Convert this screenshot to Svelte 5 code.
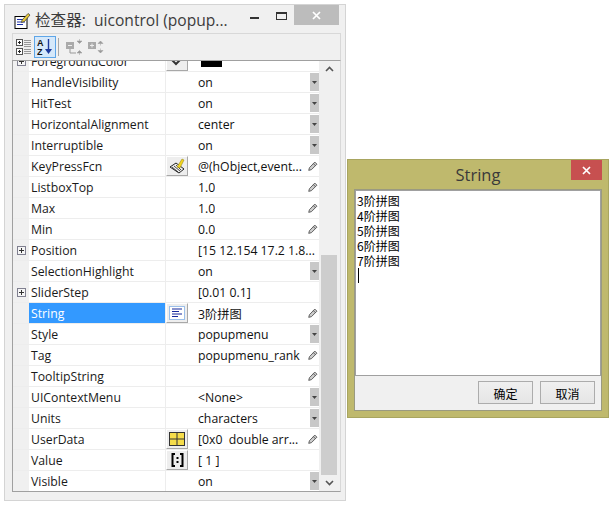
<script lang="ts">
  type Row = {
    name: string;
    value?: string;
    plus?: boolean;
    btn?: string;
    combo?: boolean;
    pen?: boolean;
    sel?: boolean;
    color?: string;
  };

  const rows: Row[] = [
    { name: "ForegroundColor", plus: true, btn: "color", color: "#000" },
    { name: "HandleVisibility", value: "on", combo: true },
    { name: "HitTest", value: "on", combo: true },
    { name: "HorizontalAlignment", value: "center", combo: true },
    { name: "Interruptible", value: "on", combo: true },
    { name: "KeyPressFcn", value: "@(hObject,event...", btn: "fcn", pen: true },
    { name: "ListboxTop", value: "1.0", pen: true },
    { name: "Max", value: "1.0", pen: true },
    { name: "Min", value: "0.0", pen: true },
    { name: "Position", value: "[15 12.154 17.2 1.8...", plus: true },
    { name: "SelectionHighlight", value: "on", combo: true },
    { name: "SliderStep", value: "[0.01 0.1]", plus: true },
    { name: "String", value: "3阶拼图", btn: "text", pen: true, sel: true },
    { name: "Style", value: "popupmenu", combo: true },
    { name: "Tag", value: "popupmenu_rank", pen: true },
    { name: "TooltipString", pen: true },
    { name: "UIContextMenu", value: "<None>", combo: true },
    { name: "Units", value: "characters", combo: true },
    { name: "UserData", value: "[0x0  double arr...", btn: "grid", pen: true },
    { name: "Value", value: "[ 1 ]", btn: "array" },
    { name: "Visible", value: "on", combo: true },
  ];

  const lines = ["3阶拼图", "4阶拼图", "5阶拼图", "6阶拼图", "7阶拼图"];
</script>

<div class="inspector">
  <div class="title">
    <svg class="app-icon" width="17" height="17" viewBox="0 0 17 17">
      <rect x="1" y="4.500" width="12" height="12" fill="#fff" stroke="#000" />
      <path d="M3 7.500h8M3 10h8M3 12.500h6" stroke="#1b2fa8" />
      <path d="M8 8l6-6.500 2 1.500-5.500 6.500-3 1z" fill="#e8c93a" stroke="#333" stroke-width=".7" />
    </svg>
    <span class="title-text">检查器:&nbsp; uicontrol (popup...</span>
    <div class="win-btns">
      <svg class="min" width="9" height="2"><rect width="9" height="2" fill="#333" /></svg>
      <svg class="max" width="11" height="8"><rect x=".5" y=".5" width="10" height="7" fill="none" stroke="#333" /><rect x="0" y="0" width="11" height="2" fill="#333" /></svg>
      <div class="close gray">
        <svg width="9" height="9" viewBox="0 0 9 9"><path d="M1 1l7 7M8 1l-7 7" stroke="#fff" stroke-width="1.7" /></svg>
      </div>
    </div>
  </div>

  <div class="toolbar">
    <span class="tool first">
      <svg width="15" height="16" viewBox="0 0 15 16">
        <rect x=".5" y=".5" width="6" height="6" fill="#fff" stroke="#555" />
        <path d="M2 3.500h3M3.500 2v3" stroke="#222" />
        <rect x=".5" y="9.500" width="6" height="6" fill="#fff" stroke="#555" />
        <path d="M2 12.500h3M3.500 11v3" stroke="#222" />
        <path d="M8 1.500h7M8 3.500h7M8 5.500h7M8 7.500h7M8 10.500h7M8 12.500h7M8 14.500h7" stroke="#999" />
      </svg>
    </span>
    <span class="tool on">
      <svg width="16" height="18" viewBox="0 0 16 18">
        <text x="0" y="8" class="az">A</text>
        <text x="0" y="17" class="az">Z</text>
        <path d="M11.500 1v11" stroke="#1c3a9e" stroke-width="1.4" />
        <path d="M8 11h7l-3.500 5z" fill="#1c3a9e" />
      </svg>
    </span>
    <span class="sep"></span>
    <span class="tool dim">
      <svg width="17" height="16" viewBox="0 0 17 16">
        <rect x="0" y="3" width="8" height="7" fill="#aaa" />
        <path d="M2 6.500h4" stroke="#eee" />
        <path d="M4 10v4h6" stroke="#999" fill="none" />
        <path d="M11 2h5l-2.500 2.500zM13.500 0v2M11 14h5l-2.500-2.500zM13.500 14v2" fill="#999" stroke="#999" stroke-width=".5" />
      </svg>
    </span>
    <span class="tool dim">
      <svg width="17" height="16" viewBox="0 0 17 16">
        <rect x="0" y="3" width="8" height="7" fill="#aaa" />
        <path d="M2 6.500h4M4 4.500v4" stroke="#eee" />
        <path d="M10 4.500h5L12.500 2zM12.500 4.500v2M10 11.500h5L12.500 14zM12.500 9.500v2" fill="#999" stroke="#999" stroke-width=".5" />
      </svg>
    </span>
  </div>

  <div class="panel">
    <div class="table">
      <div class="rows">
        {#each rows as r}
          <div class="row">
            <div class="gutter">
              {#if r.plus}
                <span class="plus"></span>
              {/if}
            </div>
            <div class="name" class:sel={r.sel}>{r.name}</div>
            <div class="btn-cell">
              {#if r.btn}
                <span class="cell-btn">
                  {#if r.btn === "color"}
                    <svg width="18" height="14" viewBox="0 0 18 14"><path d="M2 4l6 6 8-8" stroke="#333" stroke-width="2" fill="none" /></svg>
                  {:else if r.btn === "fcn"}
                    <svg width="17" height="16" viewBox="0 0 17 16">
                      <path d="M1 9l6-4 8 6-5 4z" fill="#eee" stroke="#222" />
                      <path d="M3 9l6 5M5 8l6 5M7 7l5 5" stroke="#222" stroke-width=".8" />
                      <path d="M8 9l5-8 2 1-4 8z" fill="#f2d51e" stroke="#8a7a10" stroke-width=".5" />
                    </svg>
                  {:else if r.btn === "text"}
                    <svg width="16" height="14" viewBox="0 0 16 14">
                      <rect x=".5" y=".5" width="15" height="13" fill="#fff" stroke="#9cc0ea" />
                      <path d="M3 3h10M3 5.500h7M3 8h10M3 10.500h6" stroke="#17299c" stroke-width="1.2" />
                    </svg>
                  {:else if r.btn === "grid"}
                    <svg width="16" height="14" viewBox="0 0 16 14">
                      <rect x=".5" y=".5" width="15" height="13" fill="#f5dc4a" stroke="#333" />
                      <path d="M8 0v14M0 7h16" stroke="#333" />
                    </svg>
                  {:else}
                    <svg width="13" height="14" viewBox="0 0 13 14">
                      <path d="M4 1H1.500v12H4M9 1h2.500v12H9" stroke="#000" stroke-width="2" fill="none" />
                      <path d="M6.500 4v2M6.500 8v2" stroke="#000" stroke-width="2" />
                    </svg>
                  {/if}
                </span>
              {/if}
            </div>
            <div class="value">
              {#if r.color}
                <span class="swatch"></span>
              {:else}
                <span class="val-text">{r.value ?? ""}</span>
              {/if}
              {#if r.pen}
                <svg class="pen" width="10" height="10" viewBox="0 0 11 11">
                  <path d="M7.500 1.200l2.300 2.300-6 6-3 .8.8-3z" fill="#ccc" stroke="#555" />
                  <path d="M6 3l2.200 2.200" stroke="#555" />
                </svg>
              {/if}
              {#if r.combo}
                <span class="combo">
                  <svg width="5" height="3" viewBox="0 0 7 4"><path d="M0 0h7L3.500 4z" fill="#444" /></svg>
                </span>
              {/if}
            </div>
          </div>
        {/each}
      </div>
    </div>
    <div class="scrollbar">
      <svg width="9" height="6" class="arrow" viewBox="0 0 9 6"><path d="M1 5l3.500-3.500L8 5" fill="none" stroke="#555" stroke-width="1.6" /></svg>
      <div class="track"><div class="thumb"></div></div>
      <svg width="9" height="6" class="arrow" viewBox="0 0 9 6"><path d="M1 1l3.500 3.500L8 1" fill="none" stroke="#555" stroke-width="1.6" /></svg>
    </div>
  </div>
</div>

<div class="dialog">
  <div class="dlg-title">
    <span>String</span>
    <div class="close red">
      <svg width="9" height="9" viewBox="0 0 9 9"><path d="M1 1l7 7M8 1l-7 7" stroke="#fff" stroke-width="1.7" /></svg>
    </div>
  </div>
  <div class="dlg-body">
    <div class="editor">
      {#each lines as l}
        <div class="line">{l}</div>
      {/each}
      <div class="caret"></div>
    </div>
    <div class="actions">
      <button>确定</button>
      <button>取消</button>
    </div>
  </div>
</div>

<style>
  :global(body) {
    margin: 0;
    background: #fff;
  }

  .inspector {
    position: absolute;
    left: 4px;
    top: 4px;
    width: 342px;
    height: 497px;
    box-sizing: border-box;
    border: 1px solid #d4d4d4;
    background: #f0f0f0;
    display: flex;
    flex-direction: column;
    font-family: "Open Sans", "Noto Sans CJK SC", sans-serif;
    padding: 0 4px 8px 7px;
  }

  .title {
    height: 28px;
    display: flex;
    align-items: center;
    flex: none;
    position: relative;
  }

  .app-icon {
    margin: 2px 0 0 2px;
  }

  .title-text {
    margin-left: 4px;
    font-size: 15.6px;
    color: #3c3c3c;
    white-space: nowrap;
  }

  .win-btns {
    position: absolute;
    right: 2px;
    top: 0;
    display: flex;
    align-items: flex-start;
  }

  .min {
    margin: 12px 0 0 0;
  }

  .max {
    margin: 7px 7px 0 17px;
  }

  .close {
    width: 45px;
    height: 20px;
    display: flex;
    align-items: center;
    justify-content: center;
  }

  .close.gray {
    background: #bcbcbc;
  }

  .close.red {
    width: 31px;
    background: #c75050;
  }

  .toolbar {
    height: 26px;
    flex: none;
    display: flex;
    align-items: center;
    gap: 3px;
    padding-left: 3px;
    border-top: 1px solid #d8d8d8;
    border-left: 1px solid #d8d8d8;
    border-right: 1px solid #d8d8d8;
  }

  .tool {
    height: 20px;
    display: flex;
    align-items: center;
    justify-content: center;
    box-sizing: border-box;
  }

  .tool.first {
    width: 15px;
  }

  .tool.dim {
    width: 17px;
    margin-right: 2px;
  }

  .tool.on {
    width: 22px;
    height: 22px;
    background: #d5e8fa;
    border: 1px solid #5ea6e8;
  }

  .az {
    font: bold 9px "Liberation Sans", sans-serif;
    fill: #111;
  }

  .sep {
    width: 1px;
    height: 18px;
    background: #a8a8a8;
    margin: 0 4px 0 -1px;
  }

  .panel {
    flex: 1;
    min-height: 0;
    display: flex;
    border-left: 1px solid #a0a0a0;
    border-top: 1px solid #a0a0a0;
    border-bottom: 1px solid #a0a0a0;
    border-right: 1px solid #d8d8d8;
    background: #f0f0f0;
  }

  .table {
    width: 306px;
    flex: none;
    background: #fff;
    overflow: hidden;
  }

  .rows {
    margin-top: -10px;
  }

  .row {
    height: 21px;
    display: flex;
    box-sizing: border-box;
    border-bottom: 1px solid #ededed;
    font-size: 12.25px;
    color: #000;
  }

  .gutter {
    width: 16px;
    flex: none;
    background: #f0f0f0;
    display: flex;
    align-items: center;
    justify-content: center;
  }

  .plus {
    width: 9px;
    height: 9px;
    box-sizing: border-box;
    border: 1px solid #808090;
    background:
      linear-gradient(#333, #333) center / 5px 1px no-repeat,
      linear-gradient(#333, #333) center / 1px 5px no-repeat,
      #f5f5f5;
  }

  .name {
    width: 137px;
    height: 20px;
    flex: none;
    box-sizing: border-box;
    padding-left: 2px;
    line-height: 22px;
    border-right: 1px solid #ededed;
    color: #1a1a1a;
    white-space: nowrap;
    overflow: hidden;
  }

  .name.sel {
    background: #3399ff;
    color: #fff;
  }

  .btn-cell {
    width: 24px;
    flex: none;
    display: flex;
  }

  .cell-btn {
    width: 22px;
    height: 20px;
    box-sizing: border-box;
    display: flex;
    align-items: center;
    justify-content: center;
    background: #eeeeee;
    border-right: 1px solid #a8a8a8;
    border-bottom: 1px solid #a8a8a8;
    border-top: 1px solid #fff;
    border-left: 1px solid #fff;
  }

  .value {
    flex: 1;
    min-width: 0;
    position: relative;
    display: flex;
    align-items: center;
    padding-left: 8px;
    padding-top: 1px;
    color: #111;
    white-space: pre;
  }

  .val-text {
    overflow: hidden;
  }

  .swatch {
    width: 21px;
    height: 6px;
    background: #000;
    margin: 9px 0 0 3px;
    align-self: flex-start;
  }

  .pen {
    position: absolute;
    right: 1px;
    top: 5px;
  }

  .combo {
    position: absolute;
    right: 0;
    top: 1px;
    bottom: 1px;
    width: 9px;
    background: #c8c8c8;
    display: flex;
    align-items: center;
    justify-content: center;
  }

  .scrollbar {
    flex: 1;
    display: flex;
    flex-direction: column;
    align-items: center;
    padding: 0 3px 0 2px;
  }

  .arrow {
    flex: none;
    margin: 5px 0;
  }

  .track {
    flex: 1;
    width: 100%;
    display: flex;
    align-items: flex-end;
  }

  .thumb {
    width: 100%;
    height: 220px;
    background: #cdcdcd;
  }

  .dialog {
    position: absolute;
    left: 347px;
    top: 159px;
    width: 262px;
    height: 259px;
    box-sizing: border-box;
    background: #bfb96d;
    border: 1px solid #a8a560;
    display: flex;
    flex-direction: column;
    padding: 0 6px 6px 6px;
    font-family: "Open Sans", "Noto Sans CJK SC", sans-serif;
  }

  .dlg-title {
    height: 29px;
    flex: none;
    display: flex;
    align-items: center;
    justify-content: center;
    font-size: 16.5px;
    color: #3a3a3a;
    position: relative;
  }

  .dlg-title .close {
    position: absolute;
    right: 0;
    top: 0;
  }

  .dlg-body {
    flex: 1;
    min-height: 0;
    box-sizing: border-box;
    border: 1px solid #9a9a80;
    background: #f0f0f0;
    display: flex;
    flex-direction: column;
  }

  .editor {
    flex: 1;
    background: #fff;
    border: 1px solid #a0a0a0;
    padding: 2px 1px;
    font-family: "Noto Sans CJK SC", sans-serif;
    font-size: 12px;
    line-height: 15px;
    color: #000;
  }

  .line {
    height: 15px;
  }

  .caret {
    width: 1px;
    height: 15px;
    background: #000;
    margin-left: 1px;
  }

  .actions {
    height: 34px;
    flex: none;
    display: flex;
    justify-content: flex-end;
    align-items: flex-start;
    gap: 7px;
    padding: 5px 6px 0 0;
    box-sizing: border-box;
  }

  button {
    width: 55px;
    height: 23px;
    box-sizing: border-box;
    border: 1px solid #acacac;
    background: linear-gradient(#f0f0f0, #e5e5e5);
    font-family: "Noto Sans CJK SC", sans-serif;
    font-size: 12px;
    color: #000;
    padding: 1px 0 0;
  }
</style>
